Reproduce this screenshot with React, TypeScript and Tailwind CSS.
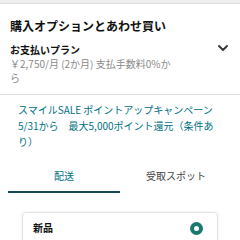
import React, { useState } from "react";

const font = { fontFamily: '"Noto Sans CJK JP", "Noto Sans", sans-serif' };

function Chevron() {
  return (
    <svg width="10" height="6" viewBox="0 0 10 6" className="text-[#333]">
      <path d="M1 1l4 4 4-4" fill="none" stroke="currentColor" strokeWidth="1.8" strokeLinecap="round" strokeLinejoin="round" />
    </svg>
  );
}

function App() {
  const [tab, setTab] = useState("delivery");

  return (
    <div className="w-[240px] h-[240px] overflow-hidden bg-white text-[#0f1111]" style={font}>
      {/* top band */}
      <div className="h-[4px] bg-[#eeeeee] border-b border-[#dddddd]" />

      {/* purchase options */}
      <div className="px-[10px] pt-[14px] pb-[9px] border-b border-[#dddddd]">
        <div className="text-[12px] leading-[16px] font-bold">購入オプションとあわせ買い</div>
        <div className="mt-[9px] flex items-start justify-between">
          <div>
            <div className="text-[10px] leading-[14px] font-bold">お支払いプラン</div>
            <div className="w-[164px] text-[10px] leading-[14px] text-[#8a8a8a]">
              ￥2,750/月 (2か月) 支払手数料0%から
            </div>
          </div>
          <div className="pt-[2px] pr-[2px]">
            <Chevron />
          </div>
        </div>
      </div>

      {/* campaign */}
      <div className="px-[18px] pt-[7px] text-[10px] leading-[16px] text-[#007185]">
        スマイルSALE ポイントアップキャンペーン 5/31から　最大5,000ポイント還元（条件あり）
      </div>

      {/* tabs */}
      <div className="mx-[8px] mt-[11px] flex">
        <button
          type="button"
          onClick={() => setTab("delivery")}
          className={
            "flex-1 h-[32px] text-[10px] leading-[14px] border-b-2 " +
            (tab === "delivery" ? "text-[#007185] border-[#134b4f]" : "text-[#444] border-transparent")
          }
        >
          配送
        </button>
        <button
          type="button"
          onClick={() => setTab("pickup")}
          className={
            "flex-1 h-[32px] text-[10px] leading-[14px] border-b-2 " +
            (tab === "pickup" ? "text-[#007185] border-[#134b4f]" : "text-[#444] border-transparent")
          }
        >
          受取スポット
        </button>
      </div>

      {/* option card */}
      <div className="mx-[22px] mt-[19px] rounded-[4px] border border-[#e3e3e3] shadow-[0_0_3px_rgba(0,0,0,0.08)] px-[10px] pt-[8px] pb-[9px] flex items-center justify-between">
        <span className="text-[10px] leading-[14px] font-bold">新品</span>
        <span className="w-[13px] h-[13px] rounded-full border-[4px] border-[#1b7a70] bg-white mr-[4px]" />
      </div>
    </div>
  );
}

export default App;
